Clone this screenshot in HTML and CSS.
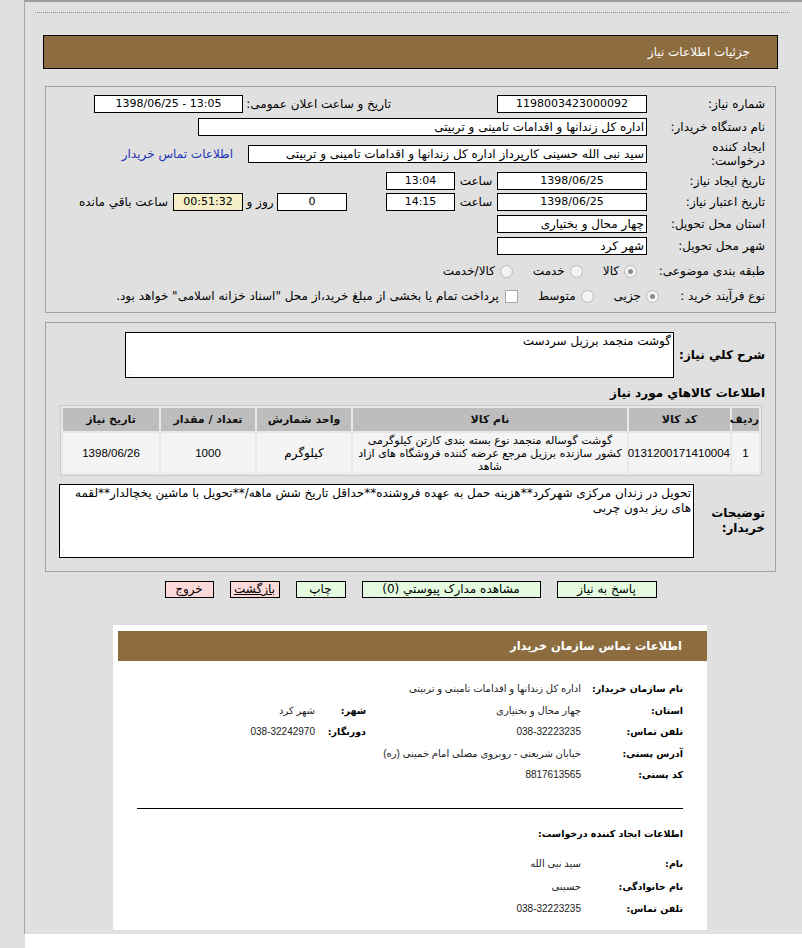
FILE: index.html
```html
<!DOCTYPE html>
<html lang="fa" dir="rtl">
<head>
<meta charset="utf-8">
<title>جزئیات اطلاعات نیاز</title>
<link rel="stylesheet" href="styles.css">
</head>
<body>
<div class="page">
  <div class="dots"></div>
  <div class="wrap">
    <div class="hdr">جزئیات اطلاعات نیاز</div>

    <div class="box box1">
      <div class="frm">
        <div class="row">
          <span class="lbl">شماره نیاز:</span>
          <span class="fld w150 c num">1198003423000092</span>
          <span class="lbl2">تاریخ و ساعت اعلان عمومی:</span>
          <span class="fld w149 c ltr num">1398/06/25 - 13:05</span>
        </div>
        <div class="row">
          <span class="lbl">نام دستگاه خریدار:</span>
          <span class="fld w449">اداره کل زندانها و اقدامات تامینی و تربیتی</span>
        </div>
        <div class="row">
          <span class="lbl two">ایجاد کننده<br>درخواست:</span>
          <span class="fld w399">سید نبی الله حسینی کارپرداز اداره کل زندانها و اقدامات تامینی و تربیتی</span>
          <a class="lnk" href="#">اطلاعات تماس خریدار</a>
        </div>
        <div class="row">
          <span class="lbl">تاریخ ایجاد نیاز:</span>
          <span class="fld w150 c num">1398/06/25</span>
          <span class="sa">ساعت</span>
          <span class="fld w69 c num">13:04</span>
        </div>
        <div class="row">
          <span class="lbl">تاریخ اعتبار نیاز:</span>
          <span class="fld w150 c num">1398/06/25</span>
          <span class="sa">ساعت</span>
          <span class="fld w69 c num">14:15</span>
          <span class="fld w70 c num days">0</span>
          <span class="rz">روز و</span>
          <span class="fld w70 c num yel">00:51:32</span>
          <span class="rem">ساعت باقي مانده</span>
        </div>
        <div class="row">
          <span class="lbl">استان محل تحویل:</span>
          <span class="fld w150">چهار محال و بختیاری</span>
        </div>
        <div class="row">
          <span class="lbl">شهر محل تحویل:</span>
          <span class="fld w150">شهر کرد</span>
        </div>
        <div class="row">
          <span class="lbl">طبقه بندی موضوعی:</span>
          <span class="opts">
            <span class="opt"><span class="radio on"></span>کالا</span>
            <span class="opt"><span class="radio"></span>خدمت</span>
            <span class="opt"><span class="radio"></span>کالا/خدمت</span>
          </span>
        </div>
        <div class="row">
          <span class="lbl lbl9">نوع فرآیند خرید :</span>
          <span class="opts opts9">
            <span class="opt"><span class="radio on"></span>جزیی</span>
            <span class="opt"><span class="radio"></span>متوسط</span>
            <span class="opt"><span class="chk"></span>پرداخت تمام یا بخشی از مبلغ خرید،از محل "اسناد خزانه اسلامی" خواهد بود.</span>
          </span>
        </div>
      </div>
    </div>

    <div class="box box2">
      <div class="srow">
        <span class="blbl w91">شرح کلي نياز:</span>
        <div class="ta ta1">گوشت منجمد برزیل سردست<span class="grip"></span></div>
      </div>
      <div class="bhead">اطلاعات کالاهاي مورد نياز</div>
      <table class="grid">
        <colgroup>
          <col class="c1"><col class="c2"><col class="c3"><col class="c4"><col class="c5"><col class="c6">
        </colgroup>
        <thead>
          <tr>
            <th>ردیف</th>
            <th>کد کالا</th>
            <th>نام کالا</th>
            <th>واحد شمارش</th>
            <th>تعداد / مقدار</th>
            <th>تاریخ نیاز</th>
          </tr>
        </thead>
        <tbody>
          <tr>
            <td class="tnum">1</td>
            <td class="tnum">0131200171410004</td>
            <td class="desc">گوشت گوساله منجمد نوع بسته بندی کارتن کیلوگرمی<br>کشور سازنده برزیل مرجع عرضه کننده فروشگاه های ازاد<br>شاهد</td>
            <td>کیلوگرم</td>
            <td class="tnum">1000</td>
            <td class="tnum">1398/06/26</td>
          </tr>
        </tbody>
      </table>
      <div class="srow nrow">
        <span class="blbl w71">توضیحات<br>خریدار:</span>
        <div class="ta ta2">تحویل در زندان مرکزی شهرکرد**هزینه حمل به عهده فروشنده**حداقل تاریخ شش ماهه/**تحویل با ماشین یخچالدار**لقمه های ریز بدون چربی<span class="grip"></span></div>
      </div>
    </div>

    <div class="btns">
      <span class="btn g b100">پاسخ به نیاز</span>
      <span class="btn g b179">مشاهده مدارک پیوستي (0)</span>
      <span class="btn g b50">چاپ</span>
      <span class="btn r b50 u">بازگشت</span>
      <span class="btn r b49">خروج</span>
    </div>

    <div class="card">
      <div class="chdr">اطلاعات تماس سازمان خریدار</div>
      <div class="crows">
        <div class="crow"><span class="cl">نام سازمان خریدار:</span><span class="cv">اداره کل زندانها و اقدامات تامینی و تربیتی</span></div>
        <div class="crow"><span class="cl">استان:</span><span class="cv">چهار محال و بختیاری</span><span class="cl2">شهر:</span><span class="cv2">شهر کرد</span></div>
        <div class="crow"><span class="cl">تلفن تماس:</span><span class="cv">038-32223235</span><span class="cl2">دورنگار:</span><span class="cv2">038-32242970</span></div>
        <div class="crow"><span class="cl">آدرس پستی:</span><span class="cv wide">خیابان شریعتی - روبروی مصلی امام خمینی (ره)</span></div>
        <div class="crow"><span class="cl">کد پستی:</span><span class="cv">8817613565</span></div>
      </div>
      <div class="chr"></div>
      <div class="csub">اطلاعات ایجاد کننده درخواست:</div>
      <div class="crows2">
        <div class="crow"><span class="cl">نام:</span><span class="cv">سید نبی الله</span></div>
        <div class="crow"><span class="cl">نام خانوادگی:</span><span class="cv">حسینی</span></div>
        <div class="crow"><span class="cl">تلفن تماس:</span><span class="cv">038-32223235</span></div>
      </div>
    </div>
  </div>
</div>
<div class="foot"></div>
</body>
</html>
```

FILE: styles.css
```css
* { box-sizing: border-box; }
html, body { margin: 0; padding: 0; }
body {
  background: #e0e0e0;
  font-family: Tahoma, "DejaVu Sans", sans-serif;
  font-size: 12px;
  color: #000;
}
.num { font-size: 11px; }
.page {
  margin-left: 24px;
  border-left: 1px solid #a8a8a8;
  border-top: 2px solid #9c9c9c;
  height: 934px;
  background: #e0e0e0;
}
.foot { margin-left: 25px; height: 14px; background: #fff; }
.dots { margin: 10px 12px 0 10px; border-top: 1px dotted #8a8a8a; }
.wrap { margin: 22px 24px 0 18px; }
.hdr {
  height: 34px;
  border: 1px solid #000;
  background: #8d6c40;
  color: #fff;
  font-size: 12px;
  padding-right: 27px;
  display: flex;
  align-items: center;
}
.box { margin: 17px 2px 0; border: 1px solid #a3a3a3; }
.box1 { height: 227px; padding: 6px 10px 0 0; }
.frm {
  display: grid;
  grid-template-rows: 22px 24px 30px 24px 18px 26px 18px 32px 18px;
}
.row { display: flex; align-items: center; white-space: nowrap; }
.lbl { width: 118px; flex: none; }
.lbl.two { line-height: 14px; }
.lbl9 { width: 106px; }
.fld {
  flex: none;
  height: 18px;
  border: 1px solid #000;
  background: #fff;
  padding: 0 2px;
  line-height: 16px;
  overflow: hidden;
  white-space: nowrap;
}
.c { text-align: center; }
.ltr { direction: ltr; }
.w150 { width: 150px; }
.w149 { width: 149px; }
.w449 { width: 449px; }
.w399 { width: 399px; }
.w69 { width: 69px; }
.w70 { width: 70px; }
.lbl2 { width: 143px; margin-right: 106px; margin-left: 5px; flex: none; }
.lnk { margin-right: 15px; color: #2233b5; text-decoration: none; }
.sa { width: 42px; text-align: center; flex: none; }
.days { margin-right: 39px; }
.rz { width: 34px; text-align: center; flex: none; }
.yel { background: #f4efc6; }
.rem { margin-right: 5px; }
.opts { display: flex; align-items: center; margin-right: 10px; }
.opts9 { margin-right: 0; }
.opt { display: inline-flex; align-items: center; margin-left: 20px; }
.radio {
  width: 13px; height: 13px; border-radius: 50%;
  border: 1px solid #b9b9b9;
  background: #f3f3f3;
  margin-left: 5px;
  position: relative;
  flex: none;
}
.radio.on::after {
  content: "";
  position: absolute;
  left: 3px; top: 3px;
  width: 5px; height: 5px;
  border-radius: 50%;
  background: #8c8c8c;
}
.chk {
  width: 13px; height: 13px;
  border: 1px solid #a6a6a6;
  background: #fff;
  margin-left: 6px;
  flex: none;
}
.box2 { margin-top: 9px; height: 250px; padding: 9px 10px 0 0; }
.srow { display: flex; align-items: center; }
.blbl { font-weight: bold; font-size: 12px; flex: none; }
.w91 { width: 91px; }
.w71 { width: 71px; line-height: 15px; }
.ta {
  position: relative;
  border: 1px solid #000;
  background: #fff;
  padding: 1px 2px;
  line-height: 15px;
}
.ta1 { width: 549px; height: 46px; }
.ta2 { width: 635px; height: 74px; }
.grip {
  position: absolute;
  left: 2px; bottom: 2px;
  width: 7px; height: 7px;
  background-image: radial-gradient(circle, #b8b8b8 0.7px, transparent 0.8px);
  background-size: 2.5px 2.5px;
  clip-path: polygon(0 0, 0 100%, 100% 100%);
}
.bhead { font-weight: bold; font-size: 12px; margin-top: 7px; height: 16px; line-height: 16px; }
.grid {
  margin-top: 4px;
  margin-right: 3px;
  width: 702px;
  table-layout: fixed;
  border: 1px solid #c9c9c9;
  border-spacing: 2px;
  background: #e8e8e8;
}
.grid th {
  background: #bdbdbd;
  height: 23px;
  font-weight: bold;
  font-size: 11px;
  padding: 0;
  color: #111;
}
.grid td {
  background: #f4f4f4;
  height: 40px;
  text-align: center;
  padding: 0 2px;
  line-height: 13px;
}
.grid td.tnum { font-family: "Liberation Sans", "DejaVu Sans", sans-serif; font-size: 11.5px; padding: 0; }
.grid td.desc { white-space: nowrap; font-size: 11px; padding: 0; }
.c1 { width: 27px; }
.c2 { width: 101px; }
.c3 { width: 274px; }
.c4 { width: 94px; }
.c5 { width: 94px; }
.c6 { width: 96px; }
.nrow { margin-top: 8px; }
.btns {
  display: flex;
  justify-content: center;
  gap: 16px;
  margin-top: 9px;
}
.btn {
  height: 17px;
  border: 1px solid #000;
  font-size: 12px;
  line-height: 15px;
  text-align: center;
  white-space: nowrap;
}
.g { background: #e4fbe0; }
.r { background: #fbd9d9; }
.u { text-decoration: underline; }
.b100 { width: 100px; }
.b179 { width: 179px; }
.b50 { width: 50px; }
.b49 { width: 49px; }
.card {
  margin: 27px 71px 0 70px;
  height: 305px;
  background: #fff;
  padding: 6px 0 0 5px;
}
.chdr {
  height: 30px;
  background: #8d6c40;
  color: #fff;
  font-weight: bold;
  font-size: 11.5px;
  display: flex;
  align-items: center;
  padding-right: 25px;
}
.crows { margin-top: 17px; padding-right: 24px; }
.crows2 { margin-top: 11px; padding-right: 24px; }
.crow { display: flex; align-items: center; height: 21.5px; white-space: nowrap; }
.crows2 .crow { height: 22.5px; }
.cl { width: 102px; font-weight: bold; font-size: 9.5px; flex: none; }
.cv, .cv2 { font-family: "Liberation Sans", "DejaVu Sans", sans-serif; font-size: 10px; color: #222; }
.cv { width: 215px; flex: none; }
.cv.wide { width: auto; }
.cl2 { width: 51px; font-weight: bold; font-size: 9.5px; flex: none; }
.chr { margin: 22px 24px 0 19px; border-top: 1px solid #000; }
.csub { margin-top: 17px; padding-right: 24px; font-weight: bold; font-size: 9.5px; height: 16px; line-height: 16px; }
```
